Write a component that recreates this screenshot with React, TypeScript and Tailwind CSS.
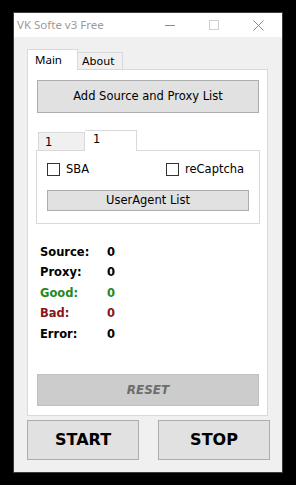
import React from "react";

const UI = { fontFamily: '"DejaVu Sans", Verdana, sans-serif' };

const STATS = [
  { label: "Source:", value: "0", color: "text-black" },
  { label: "Proxy:", value: "0", color: "text-black" },
  { label: "Good:", value: "0", color: "text-[#1f8a1f]" },
  { label: "Bad:", value: "0", color: "text-[#8c1414]" },
  { label: "Error:", value: "0", color: "text-black" },
];

const Checkbox = ({ label }: { label: string }) => (
  <label className="flex items-center gap-[6px]">
    <span className="w-[13px] h-[13px] border border-[#333] bg-white" />
    <span className="text-[11.5px] leading-[13px] text-black">{label}</span>
  </label>
);

export default function App() {
  return (
    <div className="w-[296px] h-[485px] bg-black pl-[13px] pt-[12px] text-black" style={UI}>
      <div className="w-[270px] h-[461px] border border-[#3c3c3c] flex flex-col bg-[#f0f0f0]">
        {/* Title bar */}
        <div className="h-[24px] bg-white flex items-center">
          <span
            className="ml-[3px] text-[11.5px] text-[#9a9a9a]"
            style={{ fontFamily: '"Noto Sans", "Open Sans", sans-serif' }}
          >
            VK Softe v3 Free
          </span>
          <div className="ml-auto flex items-center h-full">
            <div className="w-[10px] h-px bg-[#8a8a8a] mr-[34px]" />
            <div className="w-[10px] h-[10px] border border-[#cfcfcf] mr-[34px]" />
            <svg width="11" height="11" viewBox="0 0 11 11" className="mr-[18px]">
              <path d="M0.5 0.5 L10.5 10.5 M10.5 0.5 L0.5 10.5" stroke="#8a8a8a" strokeWidth="1" />
            </svg>
          </div>
        </div>

        {/* Body */}
        <div className="flex-1 pl-[13px] pt-[12px]">
          {/* Tab header */}
          <div className="flex items-end h-[20px]">
            <div
              className="w-[51px] h-[21px] -mb-px relative z-10 bg-white border border-b-0 border-[#d9d9d9] pl-[7px] pt-px text-[11.5px] text-black"
              style={{ fontFamily: '"Noto Sans", "Open Sans", sans-serif' }}
            >
              Main
            </div>
            <div className="w-[45px] h-[17px] bg-[#f0f0f0] border border-b-0 border-l-0 border-[#d9d9d9] pl-[4px] text-[11px] leading-[18px] text-black">
              About
            </div>
          </div>

          {/* Main panel */}
          <div className="w-[241px] h-[347px] bg-white border border-[#d9d9d9] flex flex-col pl-[9px] pt-[10px]">
            <button className="w-[222px] h-[33px] bg-[#e1e1e1] border border-[#adadad] text-[11.5px] text-black">
              Add Source and Proxy List
            </button>

            {/* Inner tabs */}
            <div className="mt-[17px] flex items-end h-[20px] pl-[1px]">
              <div className="w-[47px] h-[18px] bg-[#f0f0f0] border border-b-0 border-[#d9d9d9] pl-[6px] text-[11.5px] leading-[18px] text-black">
                1
              </div>
              <div className="w-[52px] h-[21px] -mb-px relative z-10 bg-white border border-b-0 border-l-0 border-[#d9d9d9] pl-[8px] text-[11.5px] leading-[16px] text-black">
                1
              </div>
            </div>
            <div className="-ml-[1px] w-[224px] h-[74px] border border-[#d9d9d9] bg-white flex flex-col pl-[10px] pt-[12px]">
              <div className="flex items-center">
                <div className="w-[119px]">
                  <Checkbox label="SBA" />
                </div>
                <Checkbox label="reCaptcha" />
              </div>
              <button className="mt-[14px] w-[202px] h-[21px] bg-[#e1e1e1] border border-[#adadad] text-[11.5px] text-black">
                UserAgent List
              </button>
            </div>

            {/* Stats */}
            <div className="mt-[18px] pl-[3px] flex flex-col">
              {STATS.map((s) => (
                <div key={s.label} className={`flex h-[20.5px] items-center font-bold text-[11.5px] ${s.color}`}>
                  <span className="w-[67px]">{s.label}</span>
                  <span>{s.value}</span>
                </div>
              ))}
            </div>

            <button className="mt-auto mb-[9px] w-[222px] h-[32px] bg-[#cccccc] border border-[#bfbfbf] text-[12px] font-bold italic text-[#6d6d6d]">
              RESET
            </button>
          </div>

          {/* Start / Stop */}
          <div className="mt-[4px] flex gap-[19px]">
            <button className="w-[112px] h-[40px] bg-[#e1e1e1] border border-[#adadad] text-[16px] font-bold text-black">
              START
            </button>
            <button className="w-[112px] h-[40px] bg-[#e1e1e1] border border-[#adadad] text-[16px] font-bold text-black">
              STOP
            </button>
          </div>
        </div>
      </div>
    </div>
  );
}
